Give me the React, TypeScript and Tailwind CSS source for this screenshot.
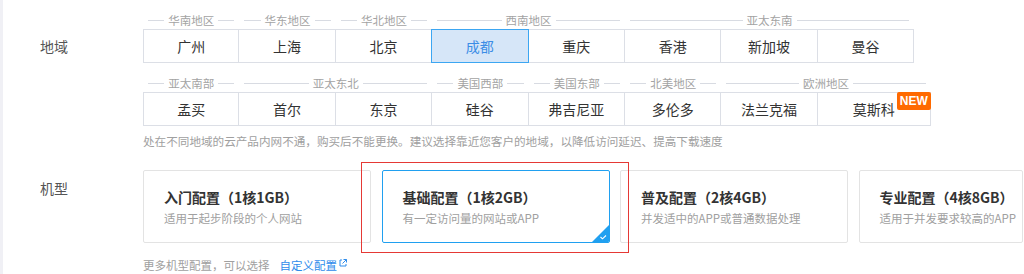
import React from 'react'

interface Group {
  name: string
  span: number
}

interface Spec {
  title: string
  desc:  string
}

const ROW1 = ['广州', '上海', '北京', '成都', '重庆', '香港', '新加坡', '曼谷']
const GROUPS1: Group[] = [
  { name: '华南地区', span: 1 },
  { name: '华东地区', span: 1 },
  { name: '华北地区', span: 1 },
  { name: '西南地区', span: 2 },
  { name: '亚太东南', span: 3 },
]

const ROW2 = ['孟买', '首尔', '东京', '硅谷', '弗吉尼亚', '多伦多', '法兰克福', '莫斯科']
const GROUPS2: Group[] = [
  { name: '亚太南部', span: 1 },
  { name: '亚太东北', span: 2 },
  { name: '美国西部', span: 1 },
  { name: '美国东部', span: 1 },
  { name: '北美地区', span: 1 },
  { name: '欧洲地区', span: 2 },
]

const SPECS: Spec[] = [
  { title: '入门配置（1核1GB）', desc: '适用于起步阶段的个人网站' },
  { title: '基础配置（1核2GB）', desc: '有一定访问量的网站或APP' },
  { title: '普及配置（2核4GB）', desc: '并发适中的APP或普通数据处理' },
  { title: '专业配置（4核8GB）', desc: '适用于并发要求较高的APP' },
]

// full class names so Tailwind picks them up
const SPAN: Record<number, string> = {
  1: 'col-span-1',
  2: 'col-span-2',
  3: 'col-span-3',
}

const FONT = "font-['Noto_Sans_CJK_SC','Noto_Sans',sans-serif]"

function GroupLabels({ groups, cols }: { groups: Group[]; cols: string }) {
  return (
    <div className={`grid ${cols} h-[17px]`}>
      {groups.map((g) => (
        <div key={g.name} className={`${SPAN[g.span]} flex items-center gap-[4px] px-[5px] pb-[1px]`}>
          <div className="flex-1 h-px bg-[#d8dbe2]" />
          <span className="text-[11.5px] leading-[16px] text-[#a3a3a3]">{g.name}</span>
          <div className="flex-1 h-px bg-[#d8dbe2]" />
        </div>
      ))}
    </div>
  )
}

function RegionRow({
  cities,
  cols,
  selected,
  badgeOn,
}: {
  cities:    string[]
  cols:      string
  selected?: string
  badgeOn?:  string
}) {
  return (
    <div className={`grid ${cols} h-[34px]`}>
      {cities.map((c, i) => {
        const isSel = c === selected
        return (
          <div
            key={c}
            className={[
              'relative flex items-center justify-center text-[14px]',
              isSel
                ? '-ml-px z-10 border border-[#3ca6f2] bg-[#d6e6f8] text-[#3b8de6]'
                : 'border-y border-r border-[#dcdfe6] text-[#333]',
              !isSel && i === 0 ? 'border-l' : '',
            ].join(' ')}
          >
            {c}
            {c === badgeOn && (
              <span className="absolute -top-px -right-px h-[18px] px-[3px] rounded-[2px] bg-[#ff6a00] text-white text-[12px] font-bold leading-[18px] font-['Liberation_Sans',sans-serif]">
                NEW
              </span>
            )}
          </div>
        )
      })}
    </div>
  )
}

function SpecCard({ spec, active, last }: { spec: Spec; active: boolean; last: boolean }) {
  return (
    <div
      className={[
        'relative shrink-0 h-[73px] rounded-[2px] border pl-[20px] pt-[16px] overflow-hidden',
        last ? 'w-[164px]' : 'w-[228px]',
        active ? 'border-[#20a0f0]' : 'border-[#e3e3e3]',
      ].join(' ')}
    >
      <div className="text-[14px] leading-[20px] font-bold text-[#333] whitespace-nowrap">{spec.title}</div>
      <div className="mt-[3px] text-[11.5px] leading-[16px] text-[#a0a0a0] whitespace-nowrap">{spec.desc}</div>
      {active && (
        <svg className="absolute right-0 bottom-0" width="17" height="17" viewBox="0 0 17 17">
          <path d="M17 0 L17 17 L0 17 Z" fill="#20a0f0" />
          <path d="M8.5 12 L10.5 13.8 L14 10.5" stroke="#fff" strokeWidth="1.1" fill="none" />
        </svg>
      )}
    </div>
  )
}

export default function App() {
  const cols1 = 'grid-cols-[repeat(8,96.4px)] w-[771px]'
  const cols2 = 'grid-cols-[repeat(7,96.4px)_113px] w-[788px]'

  return (
    <div className={`relative w-[1024px] h-[274px] overflow-hidden bg-white border-l-[3px] border-[#f0f0f5] ${FONT}`}>
      {/* 地域 */}
      <div className="flex pt-[12px]">
        <div className="w-[140px] shrink-0 pl-[37px] pt-[17px]">
          <div className="h-[34px] flex items-center text-[14px] text-[#555]">地域</div>
        </div>
        <div>
          <GroupLabels groups={GROUPS1} cols={cols1} />
          <RegionRow cities={ROW1} cols={cols1} selected="成都" />
          <div className="mt-[12px]">
            <GroupLabels groups={GROUPS2} cols={cols2} />
            <RegionRow cities={ROW2} cols={cols2} badgeOn="莫斯科" />
          </div>
          <div className="mt-[7px] text-[11.6px] leading-[16px] text-[#a0a0a0] whitespace-nowrap">
            处在不同地域的云产品内网不通，购买后不能更换。建议选择靠近您客户的地域，以降低访问延迟、提高下载速度
          </div>
        </div>
      </div>

      {/* 机型 */}
      <div className="flex mt-[21px]">
        <div className="w-[140px] shrink-0 pl-[37px] pt-[8px] text-[14px] leading-[20px] text-[#555]">机型</div>
        <div>
          <div className="flex gap-[10.5px]">
            {SPECS.map((s, i) => (
              <SpecCard key={s.title} spec={s} active={i === 1} last={i === SPECS.length - 1} />
            ))}
          </div>
          <div className="mt-[14px] flex items-center text-[11.5px] leading-[16px] text-[#a0a0a0] whitespace-nowrap">
            更多机型配置，可以选择
            <span className="ml-[10px] text-[#2f8ceb]">自定义配置</span>
            <svg className="ml-[2px] -mt-[4px]" width="8" height="8" viewBox="0 0 8 8">
              <path d="M3 1 H1 V7 H7 V5" stroke="#2f8ceb" strokeWidth="1" fill="none" />
              <path d="M4.5 0.5 H7.5 V3.5 M7.5 0.5 L3.5 4.5" stroke="#2f8ceb" strokeWidth="1" fill="none" />
            </svg>
          </div>
        </div>
      </div>

      {/* annotation box */}
      <div className="absolute left-[358px] top-[162px] w-[268px] h-[91px] border border-[#e53935] pointer-events-none" />
    </div>
  )
}
